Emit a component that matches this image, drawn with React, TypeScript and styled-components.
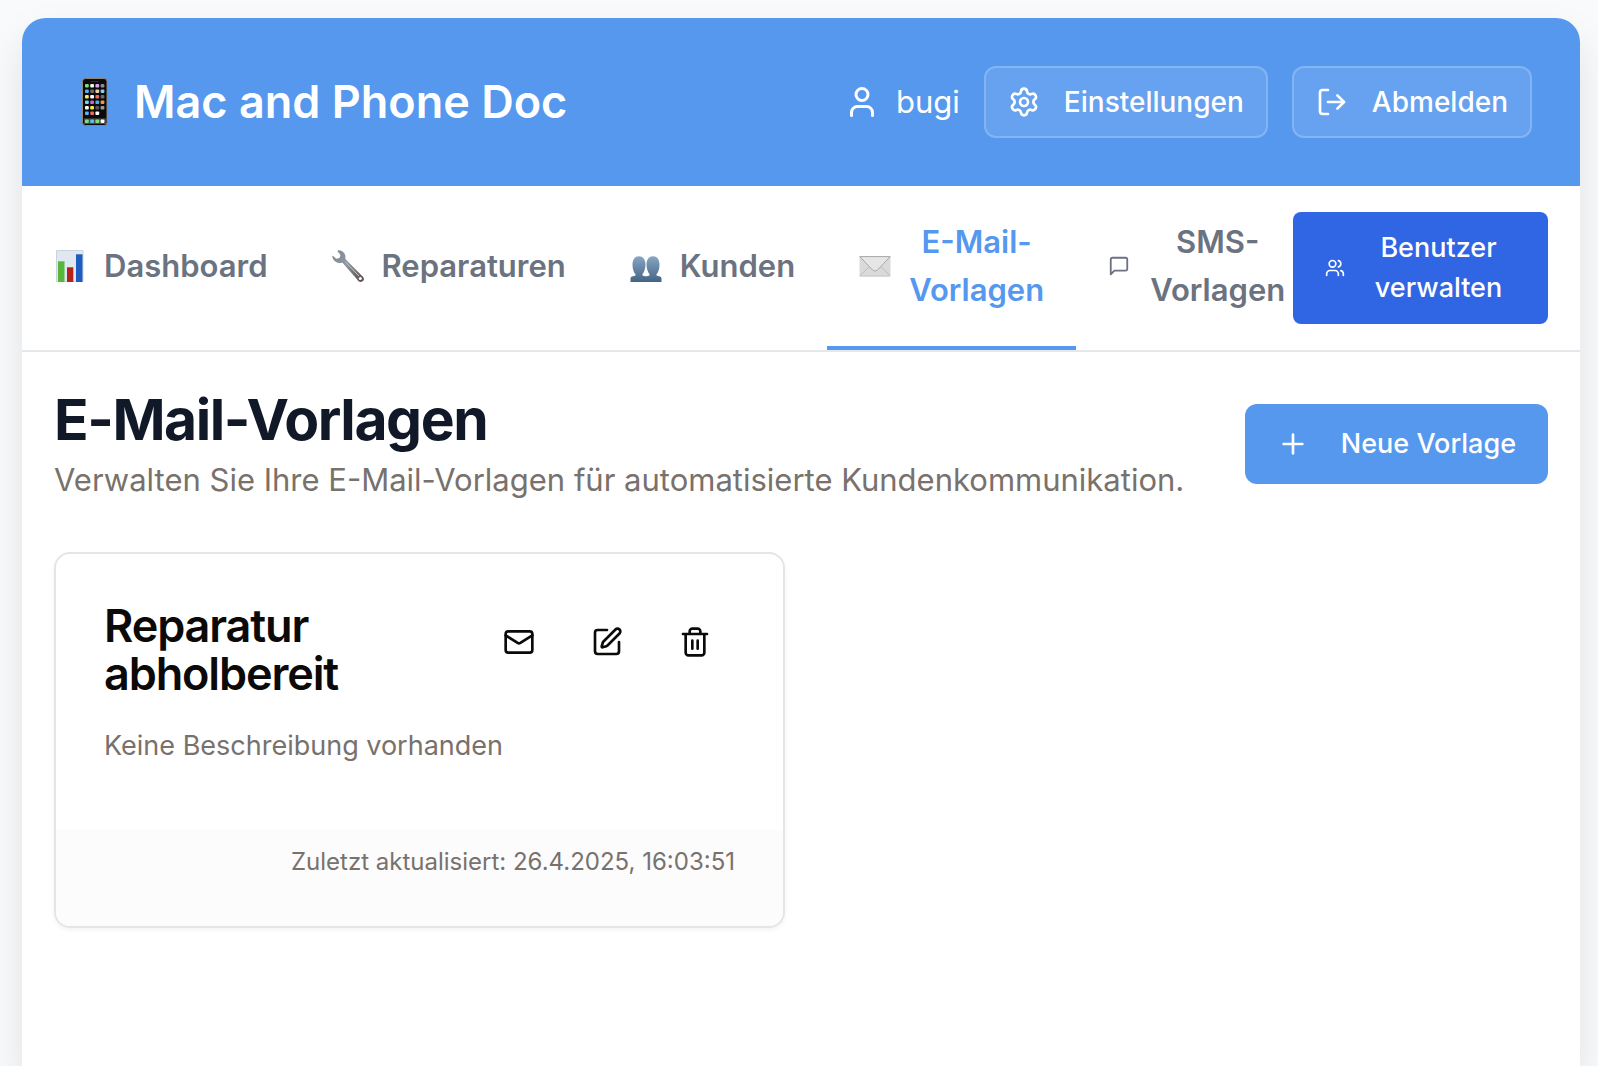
import React from "react";
import styled, { createGlobalStyle, css } from "styled-components";
import { LogOut, Mail, Plus, Settings, SquarePen, User, Users } from "lucide-react";

const color = {
  page: "#f8fafc",
  blue: "#5598ee",
  royal: "#3066e4",
  ink: "#111827",
  cardInk: "#0c0a09",
  muted: "#78716c",
  nav: "#6b7280",
};

const GlobalStyle = createGlobalStyle`
  *, *::before, *::after { box-sizing: border-box; }
  body {
    margin: 0;
    background: ${color.page};
    font-family: Inter, "Liberation Sans", sans-serif;
    color: ${color.ink};
  }
  h1, h2, p { margin: 0; }
  button { font: inherit; color: inherit; cursor: pointer; }
  svg { flex: none; display: block; }
`;

const Page = styled.div`
  min-height: 100vh;
  padding: 18px 18px 0 22px;
  display: flex;
`;

const Shell = styled.div`
  flex: 1;
  min-width: 0;
  background: #fff;
  border-radius: 24px 24px 0 0;
  box-shadow: 0 20px 40px rgba(0, 0, 0, 0.1);
`;

const Header = styled.header`
  display: flex;
  align-items: center;
  justify-content: space-between;
  padding: 48px;
  background: ${color.blue};
  color: #fff;
  border-radius: 24px 24px 0 0;
`;

const Brand = styled.div`
  display: flex;
  align-items: center;
  gap: 8px;
  font-size: 45px;
  line-height: 72px;
  font-weight: 600;
`;

const HeaderActions = styled.div`
  display: flex;
  align-items: center;
  gap: 24px;
`;

const UserName = styled.div`
  display: flex;
  align-items: center;
  gap: 16px;
  font-size: 31px;
  line-height: 48px;
`;

const buttonText = css`
  font-size: 27px;
  line-height: 40px;
  font-weight: 500;
`;

const GlassButton = styled.button`
  ${buttonText}
  font-size: 28px;
  display: flex;
  align-items: center;
  gap: 24px;
  height: 72px;
  padding: 0 22px;
  border: 2px solid rgba(255, 255, 255, 0.2);
  border-radius: 12px;
  background: rgba(255, 255, 255, 0.1);
`;

const Nav = styled.nav`
  display: flex;
  align-items: center;
  justify-content: space-between;
  padding-right: 32px;
  border-bottom: 2px solid #e5e7eb;
`;

const Tabs = styled.div`
  display: flex;
`;

const Tab = styled.a<{ $active?: boolean; $last?: boolean }>`
  display: flex;
  align-items: center;
  gap: ${(p) => (p.$last ? 20 : 18)}px;
  padding: 32px ${(p) => (p.$last ? 0 : 32)}px 32px 32px;
  border-bottom: 4px solid ${(p) => (p.$active ? color.blue : "transparent")};
  color: ${(p) => (p.$active ? color.blue : color.nav)};
  font-size: 31px;
  line-height: 48px;
  font-weight: 600;
  text-align: center;
  text-decoration: none;
`;

const TabLabel = styled.span<{ $wrap?: boolean }>`
  width: ${(p) => (p.$wrap ? "min-content" : "auto")};
`;

const ManageButton = styled.button`
  ${buttonText}
  display: flex;
  align-items: center;
  gap: 16px;
  width: 255px;
  padding: 16px 32px;
  border: 0;
  border-radius: 8px;
  background: ${color.royal};
  color: #fff;
`;

const ManageLabel = styled.span`
  flex: 1;
`;

const Main = styled.main`
  padding: 32px;
`;

const PageHead = styled.div`
  display: flex;
  align-items: center;
  justify-content: space-between;
  margin-bottom: 48px;
`;

const PageTitle = styled.h1`
  font-size: 57px;
  line-height: 72px;
  font-weight: 700;
  letter-spacing: -0.025em;
`;

const PageLead = styled.p`
  font-size: 31px;
  line-height: 48px;
  color: ${color.muted};
`;

const NewButton = styled.button`
  ${buttonText}
  display: flex;
  align-items: center;
  gap: 32px;
  height: 80px;
  padding: 0 32px;
  border: 0;
  border-radius: 12px;
  background: ${color.blue};
  color: #fff;
`;

const CardGrid = styled.div`
  display: grid;
  grid-template-columns: 1fr 1fr;
  gap: 32px;
`;

const Card = styled.article`
  border: 2px solid #e5e5e5;
  border-radius: 16px;
  overflow: hidden;
  color: ${color.cardInk};
  box-shadow: 0 2px 4px rgba(0, 0, 0, 0.05);
`;

const CardBody = styled.div`
  padding: 48px 48px 64px;
`;

const CardTop = styled.div`
  display: flex;
  align-items: flex-start;
  justify-content: space-between;
  margin-bottom: 28px;
`;

const CardTitle = styled.h2`
  width: min-content;
  font-size: 45px;
  line-height: 48px;
  font-weight: 600;
  letter-spacing: -0.025em;
`;

const IconRow = styled.div`
  display: flex;
  gap: 8px;
`;

const IconButton = styled.button`
  display: grid;
  place-items: center;
  width: 80px;
  height: 80px;
  padding: 0;
  border: 0;
  border-radius: 12px;
  background: transparent;
`;

const CardText = styled.p`
  font-size: 27px;
  line-height: 40px;
  color: ${color.muted};
`;

const CardFooter = styled.footer`
  padding: 16px 48px 48px;
  background: #fcfcfc;
  color: ${color.muted};
  font-size: 24px;
  line-height: 32px;
  text-align: right;
`;

const screenApps = [
  ["#7ee07a", "#f4f4f4", "#d9a6ee", "#8f8f8f"],
  ["#55b4f5", "#6b6b6b", "#e8cfa8", "#74d4ee"],
  ["#f5ea6a", "#fff", "#ee6a5a", "#6b6b6b"],
  ["#6adfe0", "#d45ae0", "#4ab0f5", "#f59a30"],
  ["#fff", "#f5ea4a", "#555", "#9a9a9a"],
  ["#55b4f5", "#ee6a5a", "#fff"],
];

function PhoneIcon() {
  return (
    <svg width="56" height="56" viewBox="0 0 56 56" aria-hidden="true">
      <rect x="12.5" y="4.5" width="24.5" height="47" rx="3" fill="#0b0b0b" stroke="#8d8578" />
      <path d="M21 7.5h8" stroke="#2b2b2b" />
      {screenApps.map((row, r) =>
        row.map((fill, c) => (
          <rect key={`${r}-${c}`} x={15 + c * 5.2} y={10 + r * 5.5} width="3.8" height="3.6" rx="1" fill={fill} />
        )),
      )}
      <path d="M14 44.4h22v5.6H14z" fill="#4a4a4a" />
      {["#7ee07a", "#4cc4f5", "#7ee07a", "#fff"].map((fill, c) => (
        <rect key={c} x={15 + c * 5.2} y="45.4" width="3.8" height="3.6" rx="1" fill={fill} />
      ))}
    </svg>
  );
}

function ChartIcon() {
  return (
    <svg width="32" height="32" viewBox="0 0 32 32" aria-hidden="true">
      <path d="M2.5.5h26.500v31H2.500z" fill="#dfe8f0" stroke="#c9d3dc" />
      <path d="M4 11.300h6.500V32H4z" fill="#55b83c" />
      <path d="M13 17.300h6.300V32H13z" fill="#b3231c" />
      <path d="M22 4.300h6.500V32H22z" fill="#1f5cbf" />
    </svg>
  );
}

function WrenchIcon() {
  return (
    <svg width="32" height="32" viewBox="0 0 32 32" aria-hidden="true">
      <defs>
        <linearGradient id="steel" x1="0" y1="0" x2="1" y2="1">
          <stop offset="0" stopColor="#7f8b98" />
          <stop offset=".45" stopColor="#8d959f" />
          <stop offset="1" stopColor="#574a48" />
        </linearGradient>
      </defs>
      <path
        fill="url(#steel)"
        d="M7 .3c3.600.2 6.700 3.400 6.500 7.200l-.2 1.500 16.600 16.700c1.500 1.300 2.300 2.500 1.900 4-.5 1.600-2.500 2.600-4.200 2.100-1-.3-1.600-1-2.200-2L10.300 12.500c-1.500.6-3 .7-4.600.2C2.800 11.900.8 9.700.2 6.600c-.1-.8.3-1.100.9-.5l3.200 2.600 3.200-.7L8.500 5 5.700 1.500C5.200.8 5.800.2 7 .3z"
      />
      <path d="M13 11.500 27 26" stroke="#c3c9d0" />
      <circle cx="28.300" cy="28.500" r="1.500" fill="#fff" />
    </svg>
  );
}

function PeopleIcon() {
  const person =
    "M0 26v-3.500c0-1.200.8-1.800 2.500-2.200l1.800-.5c.7-.2.9-.8.7-1.500C3.300 16.500 2 13.500 2 8.500 2 3.500 4.500.2 8.500.2S15 3.500 15 8.500c0 4.500-1.500 7.500-3 9.800-.3.700 0 1.300.7 1.500l2 .5c1.500.4 2.300 1 2.300 2.200V26z";
  return (
    <svg width="32" height="32" viewBox="0 0 32 32" aria-hidden="true">
      <defs>
        <linearGradient id="person" x1="0" y1="0" x2="0" y2="1">
          <stop offset="0" stopColor="#86a6c4" />
          <stop offset="1" stopColor="#456484" />
        </linearGradient>
      </defs>
      <path d={person} transform="translate(.5 6)" fill="url(#person)" />
      <path d={person} transform="translate(31.500 6) scale(-1 1)" fill="url(#person)" />
    </svg>
  );
}

function EnvelopeIcon() {
  return (
    <svg width="32" height="32" viewBox="0 0 32 32" aria-hidden="true">
      <rect x=".5" y="6" width="31" height="20.500" rx="1" fill="#dadada" />
      <path d="M1 25.500 11 16M31 25.500 21 16" stroke="#bcbcbc" />
      <path d="M.8 6.600 13.500 20q2.500 2.400 5 0L31.200 6.600z" fill="#e6e6e6" stroke="#a8a8a8" />
      <path d="M.8 26h30.400" stroke="#c8c8c8" />
    </svg>
  );
}

function LineIcon({ size, path }: { size: number; path: string }) {
  return (
    <svg
      width={size}
      height={size}
      viewBox="0 0 24 24"
      fill="none"
      stroke="currentColor"
      strokeWidth="2"
      strokeLinecap="round"
      strokeLinejoin="round"
      aria-hidden="true"
    >
      <path d={path} />
    </svg>
  );
}

const bubblePath = "M21 15a2 2 0 0 1-2 2H7l-4 4V5a2 2 0 0 1 2-2h14a2 2 0 0 1 2 2z";
const trashPath =
  "M3 6h18M19 6v14c0 1-1 2-2 2H7c-1 0-2-1-2-2V6M8 6V4c0-1 1-2 2-2h4c1 0 2 1 2 2v2M10 11v6M14 11v6";

const tabs = [
  { label: "Dashboard", icon: <ChartIcon /> },
  { label: "Reparaturen", icon: <WrenchIcon /> },
  { label: "Kunden", icon: <PeopleIcon /> },
  { label: "E-Mail-Vorlagen", icon: <EnvelopeIcon />, active: true, wrap: true },
  { label: "SMS-Vorlagen", icon: <LineIcon size={22} path={bubblePath} />, wrap: true, last: true },
];

export default function App() {
  return (
    <Page>
      <GlobalStyle />
      <Shell>
        <Header>
          <Brand>
            <PhoneIcon />
            <span>Mac and Phone Doc</span>
          </Brand>
          <HeaderActions>
            <UserName>
              <User size={36} />
              <span>bugi</span>
            </UserName>
            <GlassButton type="button">
              <Settings size={32} />
              Einstellungen
            </GlassButton>
            <GlassButton type="button">
              <LogOut size={32} />
              Abmelden
            </GlassButton>
          </HeaderActions>
        </Header>

        <Nav>
          <Tabs>
            {tabs.map((t) => (
              <Tab key={t.label} href="#" $active={t.active} $last={t.last} aria-current={t.active ? "page" : undefined}>
                {t.icon}
                <TabLabel $wrap={t.wrap}>{t.label}</TabLabel>
              </Tab>
            ))}
          </Tabs>
          <ManageButton type="button">
            <Users size={20} />
            <ManageLabel>Benutzer verwalten</ManageLabel>
          </ManageButton>
        </Nav>

        <Main>
          <PageHead>
            <div>
              <PageTitle>E-Mail-Vorlagen</PageTitle>
              <PageLead>Verwalten Sie Ihre E-Mail-Vorlagen für automatisierte Kundenkommunikation.</PageLead>
            </div>
            <NewButton type="button">
              <Plus size={32} />
              Neue Vorlage
            </NewButton>
          </PageHead>

          <CardGrid>
            <Card>
              <CardBody>
                <CardTop>
                  <CardTitle>Reparatur abholbereit</CardTitle>
                  <IconRow>
                    <IconButton type="button" aria-label="E-Mail senden">
                      <Mail size={32} />
                    </IconButton>
                    <IconButton type="button" aria-label="Bearbeiten">
                      <SquarePen size={32} />
                    </IconButton>
                    <IconButton type="button" aria-label="Löschen">
                      <LineIcon size={32} path={trashPath} />
                    </IconButton>
                  </IconRow>
                </CardTop>
                <CardText>Keine Beschreibung vorhanden</CardText>
              </CardBody>
              <CardFooter>Zuletzt aktualisiert: 26.4.2025, 16:03:51</CardFooter>
            </Card>
          </CardGrid>
        </Main>
      </Shell>
    </Page>
  );
}
